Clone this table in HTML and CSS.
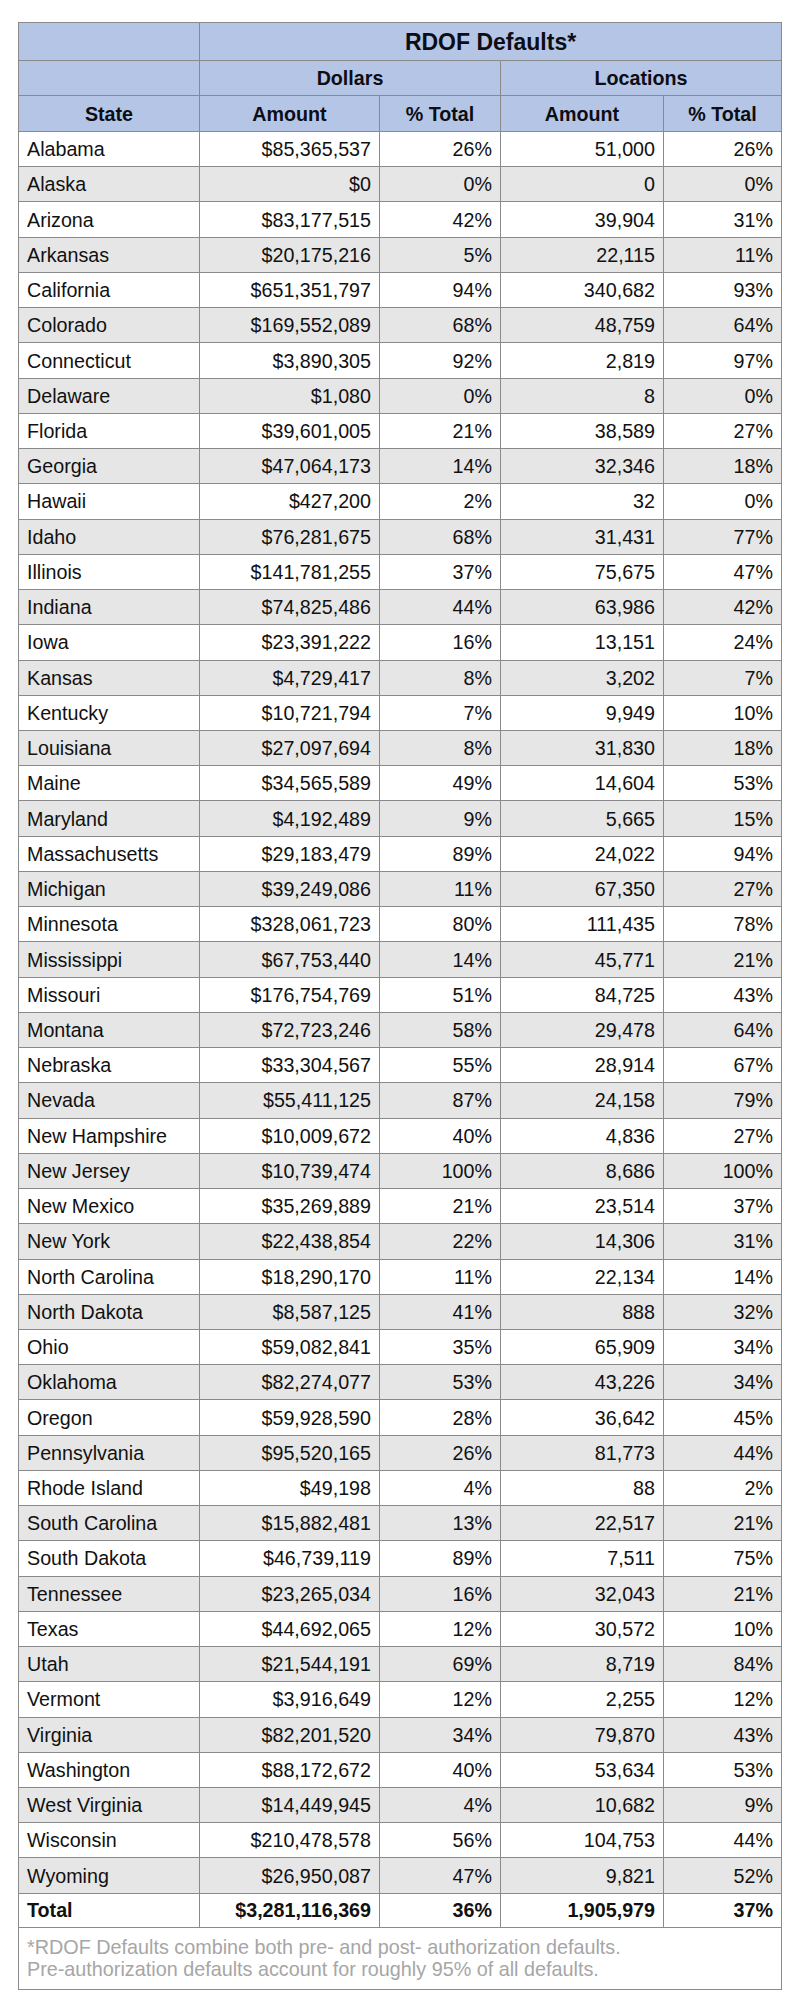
FILE: index.html
```html
<!DOCTYPE html>
<html>
<head>
<meta charset="utf-8">
<link rel="stylesheet" href="styles.css">
</head>
<body>
<div class="wrap">
<table class="rdof">
<colgroup>
<col class="c-state"><col class="c-amt"><col class="c-pct"><col class="c-loc"><col class="c-pct2">
</colgroup>
<thead>
<tr class="h1"><th></th><th colspan="4" class="title">RDOF Defaults*</th></tr>
<tr class="h2"><th></th><th colspan="2">Dollars</th><th colspan="2">Locations</th></tr>
<tr class="h3"><th>State</th><th>Amount</th><th>% Total</th><th>Amount</th><th>% Total</th></tr>
</thead>
<tbody>
<tr><td>Alabama</td><td>$85,365,537</td><td>26%</td><td>51,000</td><td>26%</td></tr>
<tr class="alt"><td>Alaska</td><td>$0</td><td>0%</td><td>0</td><td>0%</td></tr>
<tr><td>Arizona</td><td>$83,177,515</td><td>42%</td><td>39,904</td><td>31%</td></tr>
<tr class="alt"><td>Arkansas</td><td>$20,175,216</td><td>5%</td><td>22,115</td><td>11%</td></tr>
<tr><td>California</td><td>$651,351,797</td><td>94%</td><td>340,682</td><td>93%</td></tr>
<tr class="alt"><td>Colorado</td><td>$169,552,089</td><td>68%</td><td>48,759</td><td>64%</td></tr>
<tr><td>Connecticut</td><td>$3,890,305</td><td>92%</td><td>2,819</td><td>97%</td></tr>
<tr class="alt"><td>Delaware</td><td>$1,080</td><td>0%</td><td>8</td><td>0%</td></tr>
<tr><td>Florida</td><td>$39,601,005</td><td>21%</td><td>38,589</td><td>27%</td></tr>
<tr class="alt"><td>Georgia</td><td>$47,064,173</td><td>14%</td><td>32,346</td><td>18%</td></tr>
<tr><td>Hawaii</td><td>$427,200</td><td>2%</td><td>32</td><td>0%</td></tr>
<tr class="alt"><td>Idaho</td><td>$76,281,675</td><td>68%</td><td>31,431</td><td>77%</td></tr>
<tr><td>Illinois</td><td>$141,781,255</td><td>37%</td><td>75,675</td><td>47%</td></tr>
<tr class="alt"><td>Indiana</td><td>$74,825,486</td><td>44%</td><td>63,986</td><td>42%</td></tr>
<tr><td>Iowa</td><td>$23,391,222</td><td>16%</td><td>13,151</td><td>24%</td></tr>
<tr class="alt"><td>Kansas</td><td>$4,729,417</td><td>8%</td><td>3,202</td><td>7%</td></tr>
<tr><td>Kentucky</td><td>$10,721,794</td><td>7%</td><td>9,949</td><td>10%</td></tr>
<tr class="alt"><td>Louisiana</td><td>$27,097,694</td><td>8%</td><td>31,830</td><td>18%</td></tr>
<tr><td>Maine</td><td>$34,565,589</td><td>49%</td><td>14,604</td><td>53%</td></tr>
<tr class="alt"><td>Maryland</td><td>$4,192,489</td><td>9%</td><td>5,665</td><td>15%</td></tr>
<tr><td>Massachusetts</td><td>$29,183,479</td><td>89%</td><td>24,022</td><td>94%</td></tr>
<tr class="alt"><td>Michigan</td><td>$39,249,086</td><td>11%</td><td>67,350</td><td>27%</td></tr>
<tr><td>Minnesota</td><td>$328,061,723</td><td>80%</td><td>111,435</td><td>78%</td></tr>
<tr class="alt"><td>Mississippi</td><td>$67,753,440</td><td>14%</td><td>45,771</td><td>21%</td></tr>
<tr><td>Missouri</td><td>$176,754,769</td><td>51%</td><td>84,725</td><td>43%</td></tr>
<tr class="alt"><td>Montana</td><td>$72,723,246</td><td>58%</td><td>29,478</td><td>64%</td></tr>
<tr><td>Nebraska</td><td>$33,304,567</td><td>55%</td><td>28,914</td><td>67%</td></tr>
<tr class="alt"><td>Nevada</td><td>$55,411,125</td><td>87%</td><td>24,158</td><td>79%</td></tr>
<tr><td>New Hampshire</td><td>$10,009,672</td><td>40%</td><td>4,836</td><td>27%</td></tr>
<tr class="alt"><td>New Jersey</td><td>$10,739,474</td><td>100%</td><td>8,686</td><td>100%</td></tr>
<tr><td>New Mexico</td><td>$35,269,889</td><td>21%</td><td>23,514</td><td>37%</td></tr>
<tr class="alt"><td>New York</td><td>$22,438,854</td><td>22%</td><td>14,306</td><td>31%</td></tr>
<tr><td>North Carolina</td><td>$18,290,170</td><td>11%</td><td>22,134</td><td>14%</td></tr>
<tr class="alt"><td>North Dakota</td><td>$8,587,125</td><td>41%</td><td>888</td><td>32%</td></tr>
<tr><td>Ohio</td><td>$59,082,841</td><td>35%</td><td>65,909</td><td>34%</td></tr>
<tr class="alt"><td>Oklahoma</td><td>$82,274,077</td><td>53%</td><td>43,226</td><td>34%</td></tr>
<tr><td>Oregon</td><td>$59,928,590</td><td>28%</td><td>36,642</td><td>45%</td></tr>
<tr class="alt"><td>Pennsylvania</td><td>$95,520,165</td><td>26%</td><td>81,773</td><td>44%</td></tr>
<tr><td>Rhode Island</td><td>$49,198</td><td>4%</td><td>88</td><td>2%</td></tr>
<tr class="alt"><td>South Carolina</td><td>$15,882,481</td><td>13%</td><td>22,517</td><td>21%</td></tr>
<tr><td>South Dakota</td><td>$46,739,119</td><td>89%</td><td>7,511</td><td>75%</td></tr>
<tr class="alt"><td>Tennessee</td><td>$23,265,034</td><td>16%</td><td>32,043</td><td>21%</td></tr>
<tr><td>Texas</td><td>$44,692,065</td><td>12%</td><td>30,572</td><td>10%</td></tr>
<tr class="alt"><td>Utah</td><td>$21,544,191</td><td>69%</td><td>8,719</td><td>84%</td></tr>
<tr><td>Vermont</td><td>$3,916,649</td><td>12%</td><td>2,255</td><td>12%</td></tr>
<tr class="alt"><td>Virginia</td><td>$82,201,520</td><td>34%</td><td>79,870</td><td>43%</td></tr>
<tr><td>Washington</td><td>$88,172,672</td><td>40%</td><td>53,634</td><td>53%</td></tr>
<tr class="alt"><td>West Virginia</td><td>$14,449,945</td><td>4%</td><td>10,682</td><td>9%</td></tr>
<tr><td>Wisconsin</td><td>$210,478,578</td><td>56%</td><td>104,753</td><td>44%</td></tr>
<tr class="alt"><td>Wyoming</td><td>$26,950,087</td><td>47%</td><td>9,821</td><td>52%</td></tr>
<tr class="total"><td>Total</td><td>$3,281,116,369</td><td>36%</td><td>1,905,979</td><td>37%</td></tr>
<tr class="note"><td colspan="5">*RDOF Defaults combine both pre- and post- authorization defaults.<br>Pre-authorization defaults account for roughly 95% of all defaults.</td></tr>
</tbody>
</table>
</div>
</body>
</html>
```
FILE: styles.css
```css
html, body {
  margin: 0;
  padding: 0;
  background: #ffffff;
}
.wrap {
  padding: 22px 0 0 18px;
}
.rdof {
  width: 763px;
  table-layout: fixed;
  border-collapse: collapse;
  font-family: "Liberation Sans", Arial, sans-serif;
  font-size: 19.7px;
  color: #111111;
  border: 1.5px solid #7a7a7a;
}
.c-state { width: 181px; }
.c-amt { width: 180px; }
.c-pct { width: 121px; }
.c-loc { width: 163px; }
.c-pct2 { width: 118px; }
.rdof th, .rdof td {
  border: 1px solid #8a8a8a;
  padding: 0 8px;
  white-space: nowrap;
  line-height: 22px;
}
.rdof th {
  background: #b4c5e6;
  font-weight: bold;
  text-align: center;
  color: #0d0d14;
}
.rdof .h1 { height: 38px; }
.rdof .title { font-size: 23px; }
.rdof .h2 { height: 35px; }
.rdof .h3 { height: 36px; }
.rdof tbody tr { height: 35.24px; }
.rdof td {
  text-align: right;
  background: #ffffff;
}
.rdof td:first-child { text-align: left; }
.rdof .alt td { background: #e6e6e6; }
.rdof .total { height: 34px; }
.rdof .total td { font-weight: bold; }
.rdof .note td {
  text-align: left;
  color: #a6a6a6;
  font-size: 19.8px;
  padding: 8px 8px 9px 8px;
  line-height: 22px;
}
```
